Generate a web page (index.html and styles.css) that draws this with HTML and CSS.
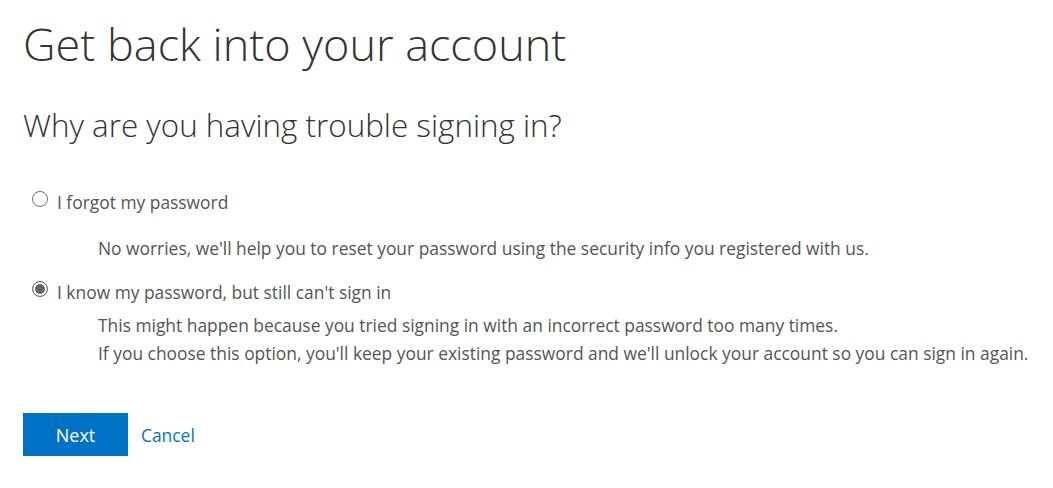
FILE: index.html
```html
<!DOCTYPE html>
<html lang="en">
  <head>
    <meta name="viewport" content="width=device-width, initial-scale=1.0" />
    <title>Get back into your account</title>
    <link rel="stylesheet" href="styles.css">
  </head>
  <body>
    <div class="page">
      <h1 class="title">Get back into your account</h1>
      <h2 class="subtitle">Why are you having trouble signing in?</h2>
      <form class="options">
        <div class="option">
          <label class="option-label">
            <input type="radio" name="reason" value="forgot" />
            <span>I forgot my password</span>
          </label>
          <p class="option-desc spaced">No worries, we'll help you to reset your password using the security info you registered with us.</p>
        </div>
        <div class="option">
          <label class="option-label">
            <input type="radio" name="reason" value="locked" checked />
            <span>I know my password, but still can't sign in</span>
          </label>
          <p class="option-desc">This might happen because you tried signing in with an incorrect password too many times.<br />If you choose this option, you'll keep your existing password and we'll unlock your account so you can sign in again.</p>
        </div>
        <div class="actions">
          <button type="button" class="btn-next">Next</button>
          <a href="#" class="cancel">Cancel</a>
        </div>
      </form>
    </div>
  </body>
</html>
```

FILE: styles.css
```css
* {
  padding: 0;
  margin: 0;
  box-sizing: border-box;
  font-family: "Open Sans", "Noto Sans", sans-serif;
}
body {
  background-color: #ffffff;
}
.page {
  padding: 16px 23px;
}
.title {
  font-size: 45px;
  font-weight: 300;
  color: #333333;
  line-height: 56px;
}
.subtitle {
  font-size: 31.4px;
  font-weight: 300;
  color: #333333;
  line-height: 40px;
  margin-top: 33px;
}
.options {
  margin-top: 46px;
}
.option-label {
  display: flex;
  align-items: center;
  gap: 9px;
  padding-left: 9px;
  font-size: 17.4px;
  color: #555555;
  line-height: 22px;
}
.option-label input {
  appearance: none;
  -webkit-appearance: none;
  flex: none;
  width: 16px;
  height: 16px;
  margin: 0 0 6px 0;
  border: 1.5px solid #6e6e6e;
  border-radius: 50%;
  background-color: #ffffff;
  cursor: pointer;
}
.option-label input:checked {
  background-color: #666666;
  box-shadow: inset 0 0 0 2px #ffffff;
}
.option-desc {
  padding-left: 75px;
  font-size: 17.4px;
  color: #555555;
  line-height: 28px;
  margin-top: 8px;
  margin-bottom: 19px;
  white-space: nowrap;
}
.option-desc.spaced {
  margin-top: 21px;
}
.actions {
  display: flex;
  align-items: center;
  gap: 13px;
  margin-top: 46px;
}
.btn-next {
  width: 105px;
  height: 43px;
  font-size: 18px;
  background-color: #0072c6;
  color: #ffffff;
  border: none;
  cursor: pointer;
}
.cancel {
  font-size: 17.4px;
  color: #0072c6;
  text-decoration: none;
}
```
